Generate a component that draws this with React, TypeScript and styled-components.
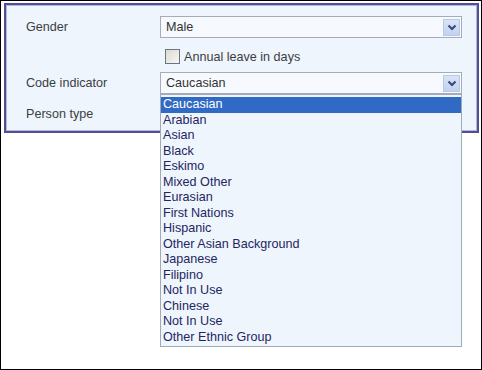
import { createGlobalStyle, styled } from "styled-components";

const GlobalStyle = createGlobalStyle`
  html, body {
    margin: 0;
    padding: 0;
    background: #ffffff;
  }
  * {
    box-sizing: border-box;
  }
`;

const Frame = styled.div`
  width: 482px;
  height: 370px;
  border: 1px solid #000000;
  padding: 2px 2px 0 3px;
  background: #ffffff;
  font-family: "Liberation Sans", Arial, sans-serif;
`;

const Panel = styled.div`
  width: 475px;
  height: 130px;
  border: 2px solid #4f4f92;
  box-shadow: inset 0 0 0 1px #b4b4e0;
  background: #eef5fd;
  padding: 11px 0 0 20px;
  display: flex;
  flex-direction: column;
`;

const Row = styled.div<{ $height: number; $gap?: number }>`
  display: grid;
  grid-template-columns: 134px 302px;
  align-items: center;
  height: ${(p) => p.$height}px;
  margin-bottom: ${(p) => p.$gap ?? 0}px;
`;

const Label = styled.span`
  font-size: 12.6px;
  color: #3d3d3d;
`;

const SelectWrap = styled.div`
  position: relative;
`;

const SelectBox = styled.div`
  height: 22px;
  border: 1px solid #a6adb8;
  background: #f6faff;
  display: flex;
  align-items: center;
  justify-content: space-between;
  padding: 0 1px 0 5px;
  font-size: 12.6px;
  color: #333333;
`;

const ArrowButton = styled.span`
  width: 17px;
  height: 17px;
  border: 1px solid #b9c8e6;
  background: linear-gradient(#d7e3f7, #c2d3f0);
  display: flex;
  align-items: center;
  justify-content: center;
`;

const CheckLine = styled.label`
  grid-column: 2;
  display: flex;
  align-items: center;
  gap: 4px;
  padding-left: 5px;
  font-size: 12.6px;
  color: #3d3d3d;
`;

const CheckBox = styled.span`
  width: 15px;
  height: 15px;
  border: 1px solid #6b7487;
  background: linear-gradient(135deg, #dcdad2, #f7f6f1);
`;

const DropList = styled.ul`
  position: absolute;
  left: 0;
  top: 100%;
  width: 302px;
  margin: 0;
  padding: 2px 0 1px 0;
  list-style: none;
  background: #eef5fd;
  border: 1px solid #a2aab8;
  z-index: 2;
`;

const Option = styled.li<{ $active?: boolean }>`
  height: 15.5px;
  line-height: 15.5px;
  padding-left: 2px;
  font-size: 12.6px;
  color: ${(p) => (p.$active ? "#ffffff" : "#25255e")};
  background: ${(p) => (p.$active ? "#316ac5" : "transparent")};
  white-space: nowrap;
`;

const Chevron = () => (
  <svg width="10" height="7" viewBox="0 0 10 7">
    <path d="M1.5 1.5 L5 5 L8.5 1.5" fill="none" stroke="#3b4a78" strokeWidth="2.2" />
  </svg>
);

const ethnicOptions = [
  "Caucasian",
  "Arabian",
  "Asian",
  "Black",
  "Eskimo",
  "Mixed Other",
  "Eurasian",
  "First Nations",
  "Hispanic",
  "Other Asian Background",
  "Japanese",
  "Filipino",
  "Not In Use",
  "Chinese",
  "Not In Use",
  "Other Ethnic Group",
];

export default function App() {
  return (
    <Frame>
      <GlobalStyle />
      <Panel>
        <Row $height={22} $gap={10}>
          <Label>Gender</Label>
          <SelectWrap>
            <SelectBox>
              <span>Male</span>
              <ArrowButton>
                <Chevron />
              </ArrowButton>
            </SelectBox>
          </SelectWrap>
        </Row>
        <Row $height={17} $gap={7}>
          <CheckLine>
            <CheckBox />
            Annual leave in days
          </CheckLine>
        </Row>
        <Row $height={22} $gap={8}>
          <Label>Code indicator</Label>
          <SelectWrap>
            <SelectBox>
              <span>Caucasian</span>
              <ArrowButton>
                <Chevron />
              </ArrowButton>
            </SelectBox>
            <DropList>
              {ethnicOptions.map((name, i) => (
                <Option key={i} $active={i === 0}>
                  {name}
                </Option>
              ))}
            </DropList>
          </SelectWrap>
        </Row>
        <Row $height={24}>
          <Label>Person type</Label>
          <SelectWrap>
            <SelectBox />
          </SelectWrap>
        </Row>
      </Panel>
    </Frame>
  );
}
